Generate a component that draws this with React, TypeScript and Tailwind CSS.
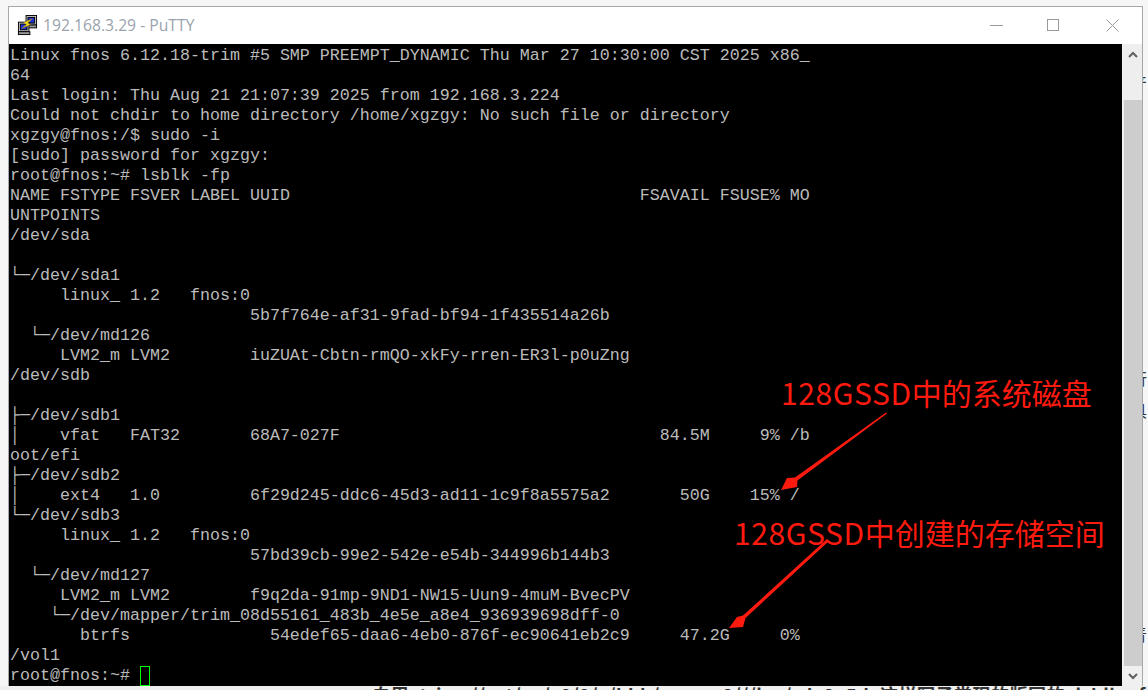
const lines = [
  "Linux fnos 6.12.18-trim #5 SMP PREEMPT_DYNAMIC Thu Mar 27 10:30:00 CST 2025 x86_",
  "64",
  "Last login: Thu Aug 21 21:07:39 2025 from 192.168.3.224",
  "Could not chdir to home directory /home/xgzgy: No such file or directory",
  "xgzgy@fnos:/$ sudo -i",
  "[sudo] password for xgzgy:",
  "root@fnos:~# lsblk -fp",
  "NAME FSTYPE FSVER LABEL UUID                                   FSAVAIL FSUSE% MO",
  "UNTPOINTS",
  "/dev/sda",
  "",
  "└─/dev/sda1",
  "     linux_ 1.2   fnos:0",
  "                        5b7f764e-af31-9fad-bf94-1f435514a26b",
  "  └─/dev/md126",
  "     LVM2_m LVM2        iuZUAt-Cbtn-rmQO-xkFy-rren-ER3l-p0uZng",
  "/dev/sdb",
  "",
  "├─/dev/sdb1",
  "│    vfat   FAT32       68A7-027F                                84.5M     9% /b",
  "oot/efi",
  "├─/dev/sdb2",
  "│    ext4   1.0         6f29d245-ddc6-45d3-ad11-1c9f8a5575a2       50G    15% /",
  "└─/dev/sdb3",
  "     linux_ 1.2   fnos:0",
  "                        57bd39cb-99e2-542e-e54b-344996b144b3",
  "  └─/dev/md127",
  "     LVM2_m LVM2        f9q2da-91mp-9ND1-NW15-Uun9-4muM-BvecPV",
  "    └─/dev/mapper/trim_08d55161_483b_4e5e_a8e4_936939698dff-0",
  "       btrfs              54edef65-daa6-4eb0-876f-ec90641eb2c9     47.2G     0%",
  "/vol1",
];

function PuttyIcon() {
  return (
    <svg width="21" height="21" viewBox="0 0 22 22" className="shrink-0">
      <rect x="9.5" y="0.5" width="11" height="10" fill="#c8c8c8" stroke="#000" />
      <rect x="11.5" y="2.5" width="7" height="6" fill="#1f2fd0" stroke="#000" />
      <rect x="9.5" y="10.5" width="11" height="3" fill="#9a9a9a" stroke="#000" />
      <rect x="1.5" y="7.5" width="11" height="10" fill="#c8c8c8" stroke="#000" />
      <rect x="3.5" y="9.5" width="7" height="6" fill="#1f2fd0" stroke="#000" />
      <rect x="1.5" y="17.5" width="12" height="3" fill="#9a9a9a" stroke="#000" />
      <path d="M16 4 L7 8 L10 10 L5 14 L14 10 L11 8.5 Z" fill="#f5e020" stroke="#b09000" strokeWidth="0.5" />
    </svg>
  );
}

function Controls() {
  return (
    <div className="flex items-center ml-auto">
      <div className="w-[59px] flex justify-center mr-[-2px]">
        <svg width="13" height="13" viewBox="0 0 13 13"><path d="M0 6.5H13" stroke="#999" /></svg>
      </div>
      <div className="w-[59px] flex justify-center">
        <svg width="13" height="13" viewBox="0 0 13 13"><rect x="0.5" y="0.5" width="11" height="11" fill="none" stroke="#999" /></svg>
      </div>
      <div className="w-[59px] flex justify-center">
        <svg width="13" height="13" viewBox="0 0 13 13"><path d="M0.5 0.5L12.5 12.5M12.5 0.5L0.5 12.5" stroke="#999" /></svg>
      </div>
    </div>
  );
}

function Scrollbar() {
  return (
    <div className="w-[20px] flex flex-col bg-[#eeeeee] pl-[1px] border-l border-[#f4f4f4]">
      <div className="h-[56px] flex justify-center pt-[7px]">
        <svg width="10" height="7" viewBox="0 0 10 7"><path d="M1 6L5 2L9 6" fill="none" stroke="#606060" strokeWidth="2" /></svg>
      </div>
      <div className="flex-1 bg-[#cdcdcd]" />
      <div className="h-[20px] flex items-center justify-center bg-[#f0f0f0]">
        <svg width="10" height="7" viewBox="0 0 10 7"><path d="M1 1L5 5L9 1" fill="none" stroke="#606060" strokeWidth="2" /></svg>
      </div>
    </div>
  );
}

function Annotations() {
  return (
    <>
      <div className="absolute left-[781px] top-[371px] text-[30px] leading-[42px] text-[#ff1a0f] whitespace-nowrap [font-family:'Noto_Sans_CJK_SC',sans-serif]">
        <span className="tracking-[0.6px]">128GSSD</span>中的系统磁盘
      </div>
      <div className="absolute left-[734px] top-[511px] text-[30px] leading-[42px] text-[#ff1a0f] whitespace-nowrap [font-family:'Noto_Sans_CJK_SC',sans-serif]">
        <span className="tracking-[0.6px]">128GSSD</span>中创建的存储空间
      </div>
      <svg className="absolute left-0 top-0 pointer-events-none" width="1148" height="690" viewBox="0 0 1148 690">
        <path d="M887 413.5L797.5 480.5L797 487L781 490L787 478L795 477.5L886 412.5Z" fill="#ff1a0f" />
        <path d="M829 541L745.5 618L743 627L729 628L737 617L743 615.5L827 539Z" fill="#ff1a0f" />
      </svg>
    </>
  );
}

export default function App() {
  return (
    <div className="relative w-[1148px] h-[690px] overflow-hidden bg-[#f6f6f6] flex flex-col">
      <div className="flex h-[686px] shrink-0">
        <div className="w-[8px] shrink-0" />
        <div className="w-[1135px] shrink-0 mt-[6px] border-t border-x border-[#a8a8a8] flex flex-col bg-white">
          <div className="h-[37px] shrink-0 flex items-center pl-[8px] gap-[5px]">
            <PuttyIcon />
            <span className="text-[15.7px] text-[#9aa3ac] whitespace-nowrap [font-family:'Open_Sans',sans-serif]">192.168.3.29 - PuTTY</span>
            <Controls />
          </div>
          <div className="flex-1 flex min-h-0">
            <div className="flex-1 bg-black pt-[2px] pl-px overflow-hidden">
              <pre className="m-0 text-[16.67px] leading-5 text-[#bbbbbb] [font-family:'Liberation_Mono',monospace]">
                {lines.map((l, i) => (
                  <div key={i} className="h-5 whitespace-pre">{l}</div>
                ))}
                <div className="h-5 flex whitespace-pre">
                  root@fnos:~# <span className="w-[10px] h-[20px] border border-[#00ff00] box-border" />
                </div>
              </pre>
            </div>
            <Scrollbar />
          </div>
        </div>
        <div className="flex-1 overflow-hidden relative text-[#333] text-[16px] leading-[20px] [font-family:'Noto_Sans_CJK_SC',sans-serif]">
          <div className="h-[72px]" />
          <div className="h-[20px] -ml-[12px] whitespace-nowrap">产</div>
          <div className="h-[276px]" />
          <div className="h-[20px] -ml-[12px] whitespace-nowrap">行</div>
          <div className="h-[12px]" />
          <div className="h-[20px] -ml-[12px] whitespace-nowrap">具</div>
          <div className="h-[148px]" />
          <div className="h-[20px] -ml-[12px] whitespace-nowrap text-[#c77a20]">9</div>
          <div className="h-[36px]" />
          <div className="h-[20px] -ml-[12px] whitespace-nowrap">青</div>
        </div>
      </div>
      <div className="h-[4px] overflow-hidden bg-[#efefef] pl-[372px] whitespace-nowrap text-[18px] font-bold leading-[20px] tracking-[0.5px] [word-spacing:6px] text-[#333] [font-family:'Noto_Sans_CJK_SC',sans-serif]">
        <div className="-mt-[2px]">自用 trim //ect/sn/ 9/9/ /bbb/ xase 3///lea/cde3a5d 这样写子常现的版网的 lsblk -f</div>
      </div>
      <Annotations />
    </div>
  );
}
